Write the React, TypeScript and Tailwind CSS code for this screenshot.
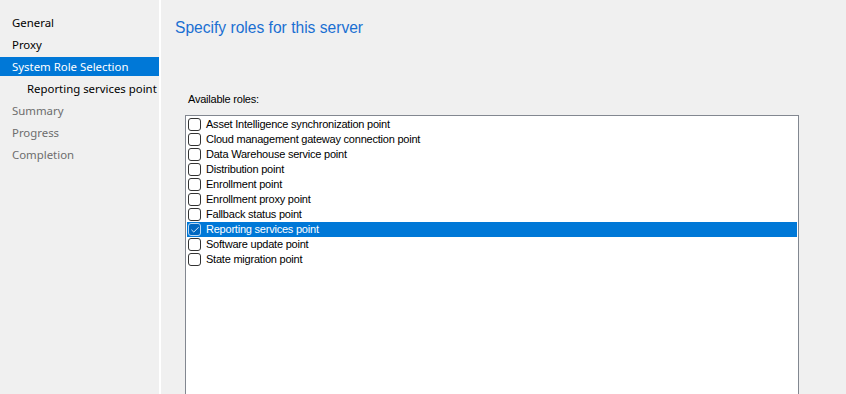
import { Check } from 'lucide-react'

const navItems = [
  { label: 'General', state: 'done' },
  { label: 'Proxy', state: 'done' },
  { label: 'System Role Selection', state: 'active' },
  { label: 'Reporting services point', state: 'sub' },
  { label: 'Summary', state: 'todo' },
  { label: 'Progress', state: 'todo' },
  { label: 'Completion', state: 'todo' },
]

const roles = [
  { label: 'Asset Intelligence synchronization point', checked: false },
  { label: 'Cloud management gateway connection point', checked: false },
  { label: 'Data Warehouse service point', checked: false },
  { label: 'Distribution point', checked: false },
  { label: 'Enrollment point', checked: false },
  { label: 'Enrollment proxy point', checked: false },
  { label: 'Fallback status point', checked: false },
  { label: 'Reporting services point', checked: true },
  { label: 'Software update point', checked: false },
  { label: 'State migration point', checked: false },
]

const Sidebar = () => (
  <nav className="w-[159px] shrink-0 bg-[#f0f0f0] pt-[13px] flex flex-col gap-[3px] font-['Noto_Sans',sans-serif] text-[11.4px]">
    {navItems.map((item) => (
      <div
        key={item.label}
        className={
          'h-[19px] flex items-center whitespace-nowrap ' +
          (item.state === 'active'
            ? 'bg-[#0078d7] text-white pl-3'
            : item.state === 'sub'
              ? 'text-black pl-[27px]'
              : item.state === 'todo'
                ? 'text-[#6d6d6d] pl-3'
                : 'text-black pl-3')
        }
      >
        {item.label}
      </div>
    ))}
  </nav>
)

const RoleRow = ({ label, checked }: { label: string; checked: boolean }) => (
  <div className={'h-[15px] flex items-center pl-px ' + (checked ? 'bg-[#0078d7] text-white' : 'text-black')}>
    <span
      className={
        'w-[13px] h-[13px] shrink-0 rounded-[3px] border flex items-center justify-center ' +
        (checked ? 'bg-[#0067c0] border-[#b9d7f2]' : 'bg-white border-[#333333]')
      }
    >
      {checked && <Check size={10} strokeWidth={2} className="text-white" />}
    </span>
    <span className="ml-[5px] whitespace-nowrap">{label}</span>
  </div>
)

export default function App() {
  return (
    <div className="w-[846px] h-[394px] overflow-hidden flex bg-white">
      <Sidebar />
      <div className="w-[2px] shrink-0 bg-white" />
      <main className="flex-1 bg-[#f0f0f0] flex flex-col">
        <h1 className="pl-[14px] pt-[18px] text-[15.6px] leading-[20px] text-[#1a6fd2] font-['Liberation_Sans',Arial,sans-serif]">
          Specify roles for this server
        </h1>
        <div className="pl-[24px] font-['Liberation_Sans',Arial,sans-serif] text-[11px] tracking-[-0.22px]">
          <p className="mt-[54px] leading-[15px] pl-[3px] text-black">Available roles:</p>
          <div className="mt-[8px] w-[614px] h-[300px] border border-[#828790] bg-white p-px flex flex-col">
            {roles.map((r) => (
              <RoleRow key={r.label} {...r} />
            ))}
          </div>
        </div>
      </main>
    </div>
  )
}
